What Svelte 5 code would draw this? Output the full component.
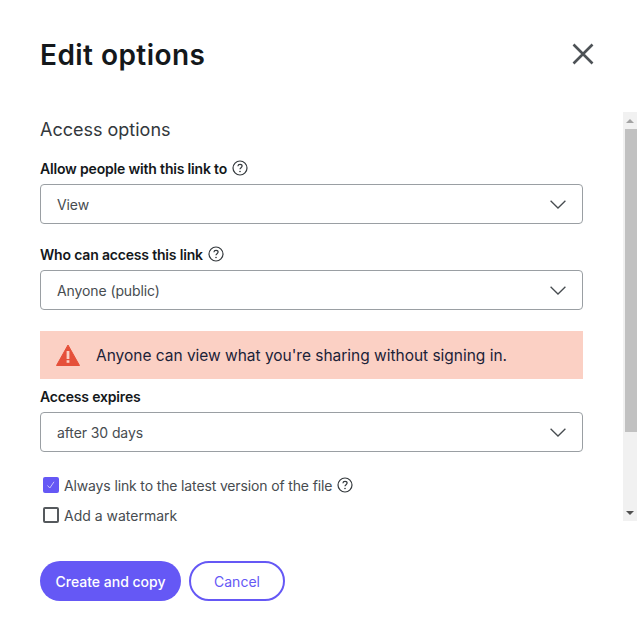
<script>
  const fields = [
    { label: 'Allow people with this link to', value: 'View', help: true },
    { label: 'Who can access this link', value: 'Anyone (public)', help: true }
  ];
</script>

{#snippet help()}
  <svg class="help" viewBox="0 0 16 16" aria-hidden="true">
    <circle cx="8" cy="8" r="7" fill="none" stroke="#33383c" stroke-width="1.2" />
    <path d="M5.9 6.2c.1-1.2 1-1.9 2.1-1.9 1.2 0 2.1.8 2.1 1.8 0 1.6-2.1 1.6-2.1 3.2" fill="none" stroke="#33383c" stroke-width="1.2" />
    <circle cx="8" cy="11.5" r=".8" fill="#33383c" />
  </svg>
{/snippet}

{#snippet select(value)}
  <div class="select">
    <span>{value}</span>
    <svg class="chevron" viewBox="0 0 16 9" aria-hidden="true">
      <path d="M.6.8 8 8 15.4.8" fill="none" stroke="#474c50" stroke-width="1.3" />
    </svg>
  </div>
{/snippet}

<div class="dialog">
  <header>
    <h1>Edit options</h1>
    <svg class="close" viewBox="0 0 22 22" aria-hidden="true">
      <path d="M1.5 1.5l19 19M20.5 1.5l-19 19" fill="none" stroke="#4d5256" stroke-width="2.6" />
    </svg>
  </header>

  <div class="scroller">
    <div class="content">
      <h2>Access options</h2>

      {#each fields as field}
        <div class="field">
          <div class="label">{field.label} {@render help()}</div>
          {@render select(field.value)}
        </div>
      {/each}

      <div class="banner">
        <svg class="warn" viewBox="0 0 24 22" aria-hidden="true">
          <path d="M12 1 23.5 21.5H.5Z" fill="#e5503a" stroke="#e5503a" stroke-width="1" stroke-linejoin="round" />
          <rect x="10.6" y="7" width="2.8" height="8" fill="#fbd0c4" />
          <rect x="10.6" y="16.2" width="2.8" height="2.6" fill="#fbd0c4" />
        </svg>
        <span>Anyone can view what you're sharing without signing in.</span>
      </div>

      <div class="field expires">
        <div class="label">Access expires</div>
        {@render select('after 30 days')}
      </div>

      <div class="check first">
        <span class="box on">
          <svg viewBox="0 0 16 16" aria-hidden="true"><path d="M4.5 8.5 6.8 11 11 4.8" fill="none" stroke="#c9c4fb" stroke-width="1" /></svg>
        </span>
        <span class="long">Always link to the latest version of the file</span>
        {@render help()}
      </div>
      <div class="check">
        <span class="box"></span>
        <span>Add a watermark</span>
      </div>
    </div>

    <div class="scrollbar" aria-hidden="true">
      <div class="arrow up"></div>
      <div class="track"><div class="thumb"></div></div>
      <div class="arrow down"></div>
    </div>
  </div>

  <footer>
    <button class="primary">Create and copy</button>
    <button class="secondary">Cancel</button>
  </footer>
</div>

<style>
  :global(body) {
    background: #fff;
    font-family: Inter, "Liberation Sans", sans-serif;
  }

  .dialog {
    width: 637px;
    height: 635px;
    display: flex;
    flex-direction: column;
    overflow: hidden;
    color: #33383c;
  }

  header {
    height: 112px;
    padding: 37px 43px 0 40px;
    box-sizing: border-box;
    display: flex;
    justify-content: space-between;
    align-items: flex-start;
  }

  h1 {
    margin: 0;
    font-size: 28px;
    line-height: 36px;
    font-weight: 600;
    letter-spacing: 0.45px;
    color: #14181b;
  }

  .close {
    width: 22px;
    height: 22px;
    margin-top: 6px;
  }

  .scroller {
    height: 409px;
    display: flex;
  }

  .content {
    flex: 1;
    padding: 8px 40px 0;
    min-width: 0;
  }

  h2 {
    margin: 0 0 18px;
    font-size: 18px;
    line-height: 20px;
    font-weight: 400;
    color: #33383c;
  }

  .field {
    margin-bottom: 20px;
  }

  .label {
    display: flex;
    align-items: center;
    gap: 5px;
    height: 20px;
    margin-bottom: 6px;
    font-size: 14px;
    font-weight: 600;
    letter-spacing: -0.18px;
    color: #14181b;
  }

  .help {
    width: 16px;
    height: 16px;
    flex: none;
  }

  .select {
    height: 40px;
    box-sizing: border-box;
    border: 1px solid #9a9fa3;
    border-radius: 4px;
    padding: 0 16px;
    display: flex;
    align-items: center;
    justify-content: space-between;
    font-size: 14px;
    letter-spacing: -0.1px;
    color: #474c50;
  }

  .chevron {
    width: 16px;
    height: 9px;
  }

  .banner {
    height: 48px;
    margin: 21px 0 7px;
    background: #fbd0c4;
    display: flex;
    align-items: center;
    gap: 16px;
    padding-left: 16px;
    font-size: 15.5px;
    letter-spacing: -0.02px;
    color: #1b2238;
  }

  .warn {
    width: 24px;
    height: 22px;
    flex: none;
  }

  .expires {
    margin-bottom: 24px;
  }

  .check {
    display: flex;
    align-items: center;
    height: 18px;
    gap: 5px;
    margin: 12px 0 0 3px;
    font-size: 14px;
    color: #474c50;
  }

  .check.first {
    margin-top: 0;
  }

  .long {
    letter-spacing: -0.14px;
  }

  .box {
    width: 16px;
    height: 16px;
    box-sizing: border-box;
    border: 2px solid #55595d;
    border-radius: 2px;
    flex: none;
  }

  .box.on {
    background: #6558f5;
    border: 0;
  }

  .box svg {
    display: block;
  }

  .scrollbar {
    width: 14px;
    background: #f1f1f1;
    display: flex;
    flex-direction: column;
    flex: none;
  }

  .arrow {
    height: 17px;
    flex: none;
    display: flex;
    align-items: center;
    justify-content: center;
  }

  .arrow::before {
    content: "";
    border-left: 4px solid transparent;
    border-right: 4px solid transparent;
  }

  .up::before {
    border-bottom: 4px solid #a3a3a3;
  }

  .down::before {
    border-top: 4px solid #505050;
  }

  .track {
    flex: 1;
  }

  .thumb {
    height: 303px;
    margin-left: 2px;
    background: #c1c1c1;
  }

  footer {
    padding: 40px 40px 0;
    display: flex;
    gap: 8px;
  }

  button {
    height: 40px;
    border-radius: 20px;
    box-sizing: border-box;
    font: 500 14px Inter, "Liberation Sans", sans-serif;
  }

  .primary {
    width: 141px;
    background: #6558f5;
    border: 0;
    color: #fff;
  }

  .secondary {
    width: 96px;
    background: #fff;
    border: 2px solid #6558f5;
    color: #6558f5;
    font-weight: 400;
  }
</style>
